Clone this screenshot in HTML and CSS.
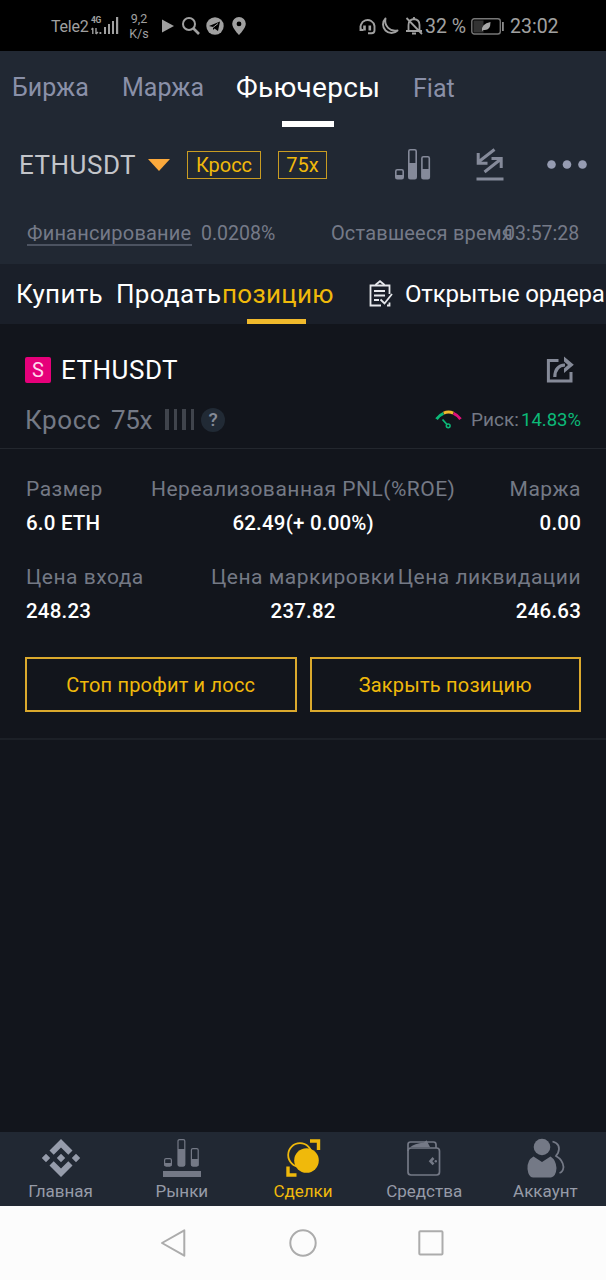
FILE: index.html
```html
<!DOCTYPE html>
<html lang="ru">
<head>
  <meta charset="UTF-8">
  <meta name="viewport" content="width=device-width, initial-scale=1.0">
  <title>Фьючерсы ETHUSDT</title>
  <link rel="stylesheet" href="styles.css">
</head>
<body>
  <div class="status-bar">
    <span class="carrier">Tele2</span>
    <div class="signal">
      <span class="signal-type">4G</span>
      <svg width="28" height="18" viewBox="0 0 28 18" fill="#a0a0a0">
        <path d="M1.800 11v6M0.400 12.600l1.600-1.600M5 11v6M5 17l2-2" stroke="#a0a0a0" stroke-width="1.400" fill="none"/>
        <rect x="8.500" y="15" width="1.800" height="2"/>
        <rect x="13" y="10" width="2" height="7"/>
        <rect x="17" y="7" width="2" height="10"/>
        <rect x="21" y="4" width="2" height="13"/>
        <rect x="25" y="0" width="2.200" height="17"/>
      </svg>
    </div>
    <div class="speed"><span>9,2</span><span>K/s</span></div>
    <svg class="st-play" width="12" height="14" viewBox="0 0 12 14"><path d="M0 0.500L12 7L0 13.500z" fill="#a0a0a0"/></svg>
    <svg class="st-search" width="18" height="18" viewBox="0 0 18 18" fill="none" stroke="#a0a0a0"><circle cx="7" cy="7" r="6" stroke-width="2"/><path d="M11.500 11.500L17 17" stroke-width="2.600"/></svg>
    <svg class="st-tg" width="18" height="18" viewBox="0 0 18 18"><circle cx="9" cy="9" r="8.700" fill="#a0a0a0"/><path d="M3 9L14 4.500L12 14L8.500 11.500L7 13V10z" fill="#000"/><path d="M7 10.500L12 6.500" stroke="#a0a0a0"/></svg>
    <svg class="st-pin" width="14" height="18" viewBox="0 0 14 18"><path d="M7 0a6.800 6.800 0 0 0-6.800 6.800C0.200 11.500 7 18 7 18s6.800-6.500 6.800-11.200A6.800 6.800 0 0 0 7 0zM7 4.500a2.400 2.400 0 1 1 0 4.800a2.400 2.400 0 0 1 0-4.800z" fill="#a0a0a0"/></svg>
    <div class="status-right">
      <svg width="17" height="18" viewBox="0 0 17 18" fill="none" stroke="#a0a0a0" stroke-width="1.900"><path d="M2.500 13.500A7 7 0 1 1 15.500 9v4.500q0 2.700-3 2.700H9M1.500 9v4h3"/><path d="M5.500 8.500v5M10.800 8.500v5" stroke-width="2.600"/></svg>
      <svg width="18" height="18" viewBox="0 0 18 18" fill="none" stroke="#a0a0a0" stroke-width="1.900"><path d="M4.500 1.500A8.300 8.300 0 1 0 16.500 13.500A10 10 0 0 1 4.500 1.500z" stroke-linejoin="round"/></svg>
      <svg class="st-bell" width="18" height="18" viewBox="0 0 18 18" fill="none" stroke="#a0a0a0" stroke-width="1.800"><path d="M3.500 14V8q0-5.500 5.500-6q5.500 .5 5.500 6v6M1 14h16M1.500 1L17 17M9 0v2M7 16.500h4"/></svg>
      <span class="percent">32 %</span>
      <svg class="battery" width="34" height="17" viewBox="0 0 34 17"><rect x="0.800" y="0.800" width="28.500" height="15.200" rx="2.500" fill="none" stroke="#777" stroke-width="1.400"/><rect x="2.500" y="2.500" width="10" height="12" fill="#333"/><path d="M11 13q-1-7 8.500-9q0 9-7 8z" fill="#a8a8a8"/><rect x="31" y="4" width="1.800" height="9" fill="#8c8c8c"/></svg>
      <span class="clock">23:02</span>
    </div>
  </div>

  <div class="header">
    <div class="market-tabs">
      <span class="market-tab spot">Биржа</span>
      <span class="market-tab margin">Маржа</span>
      <span class="market-tab active">Фьючерсы</span>
      <span class="market-tab fiat">Fiat</span>
    </div>

    <div class="pair-row">
      <span class="pair-name">ETHUSDT</span>
      <span class="caret"></span>
      <span class="badge badge-mode">Кросс</span>
      <span class="badge badge-lev">75x</span>
      <div class="pair-actions">
        <svg width="36" height="31" viewBox="0 0 36 31"><g fill="none" stroke="#858a9a" stroke-width="1.600"><rect x="0.800" y="20.800" width="7.400" height="8.900" rx="1.500"/><rect x="13.800" y="0.800" width="7.400" height="28.900" rx="1.500"/><rect x="26.900" y="7.800" width="7.400" height="21.900" rx="1.500"/></g><path d="M1 26h7v4h-7zM14 14h7v16h-7zM27 20h7v10h-7z" fill="#858a9a"/></svg>
        <svg class="swap" width="28" height="33" viewBox="0 0 28 33" fill="none" stroke="#858a9a" stroke-width="3"><path d="M18.500 1.500L3 13.500M2.200 5v10.300H11.500"/><path d="M8.500 24L25 11M15.500 10.500h9.700v9.500"/><path d="M0.500 31h27"/></svg>
        <svg class="dots" width="40" height="9" viewBox="0 0 40 9" fill="#969cb2"><circle cx="4.500" cy="4.500" r="4.300"/><circle cx="20" cy="4.500" r="4.300"/><circle cx="35.500" cy="4.500" r="4.300"/></svg>
      </div>
    </div>

    <div class="funding-row">
      <span class="funding-label">Финансирование</span>
      <span class="funding-rate">0.0208%</span>
      <span class="time-label">Оставшееся время</span>
      <span class="time-left">03:57:28</span>
    </div>
  </div>

  <div class="order-tabs">
    <span class="order-tab buy">Купить</span>
    <span class="order-tab sell">Продать</span>
    <span class="order-tab active">позицию</span>
    <svg class="clipboard" width="24" height="28" viewBox="0 0 24 28" fill="none" stroke="#e6e8ec" stroke-width="1.800"><path d="M20.500 14V5.500H1.500V25.500H12M18 25.500h2.500v-3"/><path d="M7 5.500V4.500L11 1.200L15 4.500V5.500"/><path d="M5 11h11M5 15.500h11M5 20h5"/><path d="M11.500 19.500L15.500 23.500L23 14"/></svg>
    <span class="order-tab open-orders">Открытые ордера</span>
  </div>

  <div class="position">
    <div class="position-head">
      <div class="symbol-row">
        <span class="side">S</span>
        <span class="symbol">ETHUSDT</span>
        <svg class="share" width="28" height="28" viewBox="0 0 28 28" fill="none" stroke="#858a98" stroke-width="3"><path d="M12.500 4.400H2.400V25H25V16"/><path d="M8.800 21Q9 9.500 19 9" stroke-width="3.200"/><path d="M18 0.500L27.800 8.800L18 17V12.500L22 9L18 5.500z" fill="#858a98" stroke="none"/></svg>
      </div>
      <div class="mode-row">
        <span class="mode">Кросс</span>
        <span class="lev">75x</span>
        <span class="adl"><i></i><i></i><i></i><i></i></span>
        <span class="help">?</span>
        <div class="risk">
          <svg width="27" height="19" viewBox="0 0 27 19" fill="none"><path d="M1.500 9.200Q4.500 4.800 8.500 3.300" stroke="#0cb978" stroke-width="3"/><path d="M8.700 3.200Q13.500 1 18.300 3.200" stroke="#f0b92c" stroke-width="3"/><path d="M18.500 3.300Q22.500 4.800 25.500 9.200" stroke="#e2107b" stroke-width="3"/><path d="M7.500 9.500L12 14.500" stroke="#0cb978" stroke-width="1.800"/><circle cx="13.200" cy="15.800" r="1.900" stroke="#0cb978" stroke-width="1.500"/></svg>
          <span class="risk-label">Риск:</span>
          <span class="risk-value">14.83%</span>
        </div>
      </div>
    </div>

    <div class="stats">
      <div class="stat s-size"><span class="label">Размер</span><span class="value">6.0 ETH</span></div>
      <div class="stat s-pnl"><span class="label">Нереализованная PNL(%ROE)</span><span class="value">62.49(+ 0.00%)</span></div>
      <div class="stat right"><span class="label">Маржа</span><span class="value">0.00</span></div>
    </div>
    <div class="stats">
      <div class="stat s-entry"><span class="label">Цена входа</span><span class="value">248.23</span></div>
      <div class="stat s-mark"><span class="label">Цена маркировки</span><span class="value">237.82</span></div>
      <div class="stat right"><span class="label">Цена ликвидации</span><span class="value">246.63</span></div>
    </div>

    <div class="buttons">
      <button class="btn btn-stop">Стоп профит и лосс</button>
      <button class="btn btn-close">Закрыть позицию</button>
    </div>
  </div>

  <div class="bottom-nav">
    <div class="nav-item">
      <svg width="40" height="40" viewBox="0 0 40 40" fill="#969cab"><path d="M20 1L31.500 12.500L27.300 16.700L20 9.400L12.700 16.700L8.500 12.500zM20 39L8.500 27.500L12.700 23.300L20 30.600L27.300 23.300L31.500 27.500zM20 15.800L24.200 20L20 24.200L15.800 20zM5 15.800L9.200 20L5 24.200L.8 20zM35 15.800L39.200 20L35 24.200L30.800 20z"/></svg>
      <span>Главная</span>
    </div>
    <div class="nav-item">
      <svg width="40" height="40" viewBox="0 0 40 40" fill="#747986"><g fill="none" stroke="#747986" stroke-width="1.200"><rect x="2.600" y="20.600" width="6.800" height="7.500" rx="1.500"/><rect x="16" y="1.600" width="6.800" height="26.500" rx="1.500"/><rect x="29.400" y="10.600" width="6.800" height="17.500" rx="1.500"/></g><path d="M2.500 25h7v3h-7zM16 11h7v17h-7zM29.400 21h7v7h-7zM1 33h38v6h-38z"/></svg>
      <span>Рынки</span>
    </div>
    <div class="nav-item active">
      <svg width="40" height="40" viewBox="0 0 40 40" fill="none" stroke="#f0b90b"><circle cx="17" cy="17" r="11.800" stroke-width="1.800"/><circle cx="23.500" cy="22.500" r="12.300" fill="#f0b90b" stroke="none"/><path d="M27 3h8.500v9M5 28.500v8.500h8.500" stroke-width="3.400"/></svg>
      <span>Сделки</span>
    </div>
    <div class="nav-item">
      <svg width="40" height="40" viewBox="0 0 40 40" fill="none" stroke="#747986" stroke-width="1.700"><rect x="4" y="10" width="31.500" height="27" rx="3"/><path d="M4 13V6.500Q4 4 6.500 4H29.500Q32 4 32 6.500V10"/><path d="M6.500 9Q10 5.500 20 4.500L22.500 2.300L26 9z" fill="#747986" stroke="none"/><path d="M29.500 20L26.500 23.200L29.500 26.400" stroke-width="2.600"/><circle cx="31.800" cy="23.200" r="1.200" fill="#747986" stroke="none"/></svg>
      <span>Средства</span>
    </div>
    <div class="nav-item">
      <svg width="40" height="40" viewBox="0 0 40 40" fill="#747986"><circle cx="17" cy="9" r="8.300"/><path d="M8.500 18.500Q2 22 2.500 31Q3.500 39.500 8 39.500H26Q31 38.500 31.500 30Q31 22 25.500 18.500L17 24z"/><path d="M27.500 3.500Q36.500 6 33 15Q31.500 17 31 18Q38 22 38.500 29Q38 34 34.500 35" fill="none" stroke="#747986" stroke-width="1.800"/></svg>
      <span>Аккаунт</span>
    </div>
  </div>

  <div class="system-nav">
    <svg width="26" height="30" viewBox="0 0 26 30" fill="none" stroke="#acacac" stroke-width="2" stroke-linejoin="round"><path d="M24.300 2.300V27.700L2 15z"/></svg>
    <svg class="sys-home" width="28" height="28" viewBox="0 0 28 28" fill="none" stroke="#acacac" stroke-width="2"><circle cx="14" cy="14" r="12.700"/></svg>
    <svg class="sys-recent" width="26" height="26" viewBox="0 0 26 26" fill="none" stroke="#acacac" stroke-width="2"><rect x="1.300" y="1.300" width="23.200" height="23.200" rx="1"/></svg>
  </div>
</body>
</html>
```
FILE: styles.css
```css
* {
  margin: 0;
  padding: 0;
  box-sizing: border-box;
  font-family: Roboto, "Noto Sans", sans-serif;
}

body {
  width: 606px;
  height: 1280px;
  background: #12151c;
  color: white;
  display: flex;
  flex-direction: column;
  overflow: hidden;
  white-space: nowrap;
}

svg {
  display: block;
  flex-shrink: 0;
}

/* Status bar */
.status-bar {
  height: 51px;
  background: #000;
  color: #a0a0a0;
  display: flex;
  align-items: center;
  padding: 1px 47px 0 51px;
  flex-shrink: 0;
}

.carrier {
  font-size: 16px;
  letter-spacing: -0.2px;
  width: 40px;
}

.signal {
  position: relative;
  width: 27px;
}

.signal-type {
  position: absolute;
  left: 0;
  top: -1px;
  font-size: 8.5px;
  line-height: 9px;
  font-weight: bold;
  letter-spacing: -0.4px;
}

.speed {
  display: flex;
  flex-direction: column;
  align-items: center;
  width: 20px;
  margin-left: 11px;
  font-size: 12.5px;
  line-height: 15px;
}

.st-play {
  margin-left: 13px;
}

.st-search {
  margin-left: 8px;
}

.st-tg {
  margin-left: 6px;
}

.st-pin {
  margin-left: 8px;
}

.status-right {
  display: flex;
  align-items: center;
  margin-left: auto;
}

.status-right svg + svg {
  margin-left: 5px;
}

.status-right .st-bell {
  margin-left: 6px;
}

.percent {
  font-size: 19.5px;
  width: 42px;
  margin-left: 2px;
}

.battery {
  margin-left: 4px;
}

.clock {
  font-size: 19.5px;
  width: 49px;
  margin-left: 5px;
}

/* Header */
.header {
  height: 213px;
  background: #212833;
  flex-shrink: 0;
}

.market-tabs {
  height: 76px;
  display: flex;
  padding-left: 12px;
  line-height: 74px;
}

.market-tab {
  font-size: 25px;
  color: #8a90a8;
}

.market-tab.spot {
  width: 110px;
}

.market-tab.margin {
  width: 114px;
}

.market-tab.active {
  position: relative;
  width: 177px;
  font-size: 28px;
  letter-spacing: 0.3px;
  color: #fff;
}

.market-tab.active::after {
  content: "";
  position: absolute;
  left: 46px;
  bottom: 0;
  width: 52px;
  height: 6px;
  background: #fff;
}

.market-tab.fiat {
  line-height: 76px;
}

.pair-row {
  display: flex;
  align-items: center;
  height: 75px;
  padding: 0 19px;
}

.pair-name {
  font-size: 26px;
  letter-spacing: 0.5px;
  width: 129px;
  color: #c3c5ca;
}

.caret {
  border: 11px solid transparent;
  border-top: 12px solid #fba93c;
  border-bottom: none;
}

.badge {
  height: 28px;
  border: 1px solid #c99c22;
  color: #f0b90b;
  font-size: 20px;
  line-height: 26px;
  text-align: center;
}

.badge-mode {
  width: 74px;
  margin-left: 17px;
}

.badge-lev {
  width: 49px;
  margin-left: 17px;
}

.pair-actions {
  display: flex;
  align-items: center;
  margin-left: auto;
}

.swap {
  margin-left: 45px;
}

.dots {
  margin-left: 43px;
}

.funding-row {
  display: flex;
  align-items: center;
  height: 62px;
  padding: 0 27px;
  font-size: 20px;
  color: #757a88;
}

.funding-label {
  width: 165px;
  height: 25px;
  line-height: 24px;
  letter-spacing: 0.2px;
  border-bottom: 2px solid #4c5361;
  margin-top: 1px;
}

.funding-rate {
  margin-left: 9px;
  width: 75px;
  font-size: 19.5px;
}

.time-label {
  margin-left: auto;
  letter-spacing: 0.2px;
}

.time-left {
  width: 75px;
  margin-left: -9px;
  font-size: 19.5px;
}

/* Order tabs */
.order-tabs {
  height: 60px;
  background: #1a1f29;
  display: flex;
  align-items: center;
  padding-left: 16px;
  font-size: 26px;
  letter-spacing: 0.3px;
  line-height: 60px;
  flex-shrink: 0;
}

.buy {
  width: 100px;
}

.sell {
  width: 106px;
}

.order-tab.active {
  position: relative;
  color: #f0b90b;
  width: 146px;
}

.order-tab.active::after {
  content: "";
  position: absolute;
  left: 25px;
  bottom: 0;
  width: 59px;
  height: 5px;
  background: #f0b92c;
}

.open-orders {
  margin-left: 12px;
  font-size: 24px;
  letter-spacing: -0.2px;
}

.clipboard {
  margin-left: 1px;
}

/* Position card */
.position {
  height: 416px;
  border-bottom: 2px solid #1c2027;
  flex-shrink: 0;
}

.position-head {
  height: 125px;
  padding: 21px 26px 0 25px;
  border-bottom: 1px solid #23272e;
}

.symbol-row {
  display: flex;
  align-items: center;
  height: 50px;
}

.side {
  width: 26px;
  height: 26px;
  border-radius: 2px;
  background: #e6007a;
  color: #ffd9ee;
  font-size: 20px;
  line-height: 26px;
  text-align: center;
}

.symbol {
  font-size: 26px;
  letter-spacing: 0.5px;
  margin-left: 10px;
}

.share {
  margin-left: auto;
  margin-right: 6px;
}

.mode-row {
  display: flex;
  align-items: center;
  height: 49px;
  color: #747985;
  font-size: 26px;
}

.mode {
  width: 86px;
  letter-spacing: 0.6px;
}

.lev {
  width: 54px;
  letter-spacing: -0.3px;
}

.adl {
  display: flex;
  gap: 5px;
}

.adl i {
  width: 3.5px;
  height: 21px;
  background: #40444c;
}

.help {
  width: 24px;
  height: 24px;
  margin-left: 7px;
  border-radius: 50%;
  background: #212a35;
  color: #858b97;
  font-size: 19px;
  font-weight: 500;
  line-height: 24px;
  text-align: center;
}

.risk {
  display: flex;
  align-items: center;
  margin-left: auto;
  font-size: 19px;
}

.risk-label {
  margin-left: 9px;
  width: 50px;
}

.risk-value {
  width: 59px;
  font-size: 18.5px;
  color: #0cb978;
}

.stats {
  display: flex;
  height: 88px;
  padding: 23px 25px 0 26px;
}

.stat {
  display: flex;
  flex-direction: column;
  align-items: center;
  font-size: 21px;
}

.stat .label {
  color: #747985;
  height: 34px;
  line-height: 34px;
  letter-spacing: 0.5px;
}

.stat .value {
  height: 34px;
  line-height: 34px;
  font-size: 20.5px;
  font-weight: 500;
  letter-spacing: 0.2px;
}

.s-size,
.s-entry {
  align-items: flex-start;
}

.s-size {
  width: 125px;
}

.s-entry {
  width: 185px;
}

.stat.right {
  margin-left: auto;
  align-items: flex-end;
}

.buttons {
  display: flex;
  gap: 13px;
  padding: 32px 25px 0;
}

.btn {
  flex: 1;
  height: 55px;
  background: transparent;
  border: 2px solid #dba92d;
  color: #f0b90b;
  font-size: 20px;
  letter-spacing: 0.2px;
}

/* App navigation */
.bottom-nav {
  margin-top: auto;
  height: 74px;
  background: #212833;
  display: flex;
  flex-shrink: 0;
}

.nav-item {
  flex: 1;
  display: flex;
  flex-direction: column;
  align-items: center;
  padding-top: 6px;
  color: #969ba8;
  font-size: 17px;
  line-height: 26px;
}

.nav-item.active {
  color: #f0b90b;
}

/* Android buttons */
.system-nav {
  height: 74px;
  background: #fcfcfc;
  display: flex;
  align-items: center;
  padding-left: 160px;
  flex-shrink: 0;
}

.sys-home {
  margin-left: 103px;
}

.sys-recent {
  margin-left: 101px;
}
```
